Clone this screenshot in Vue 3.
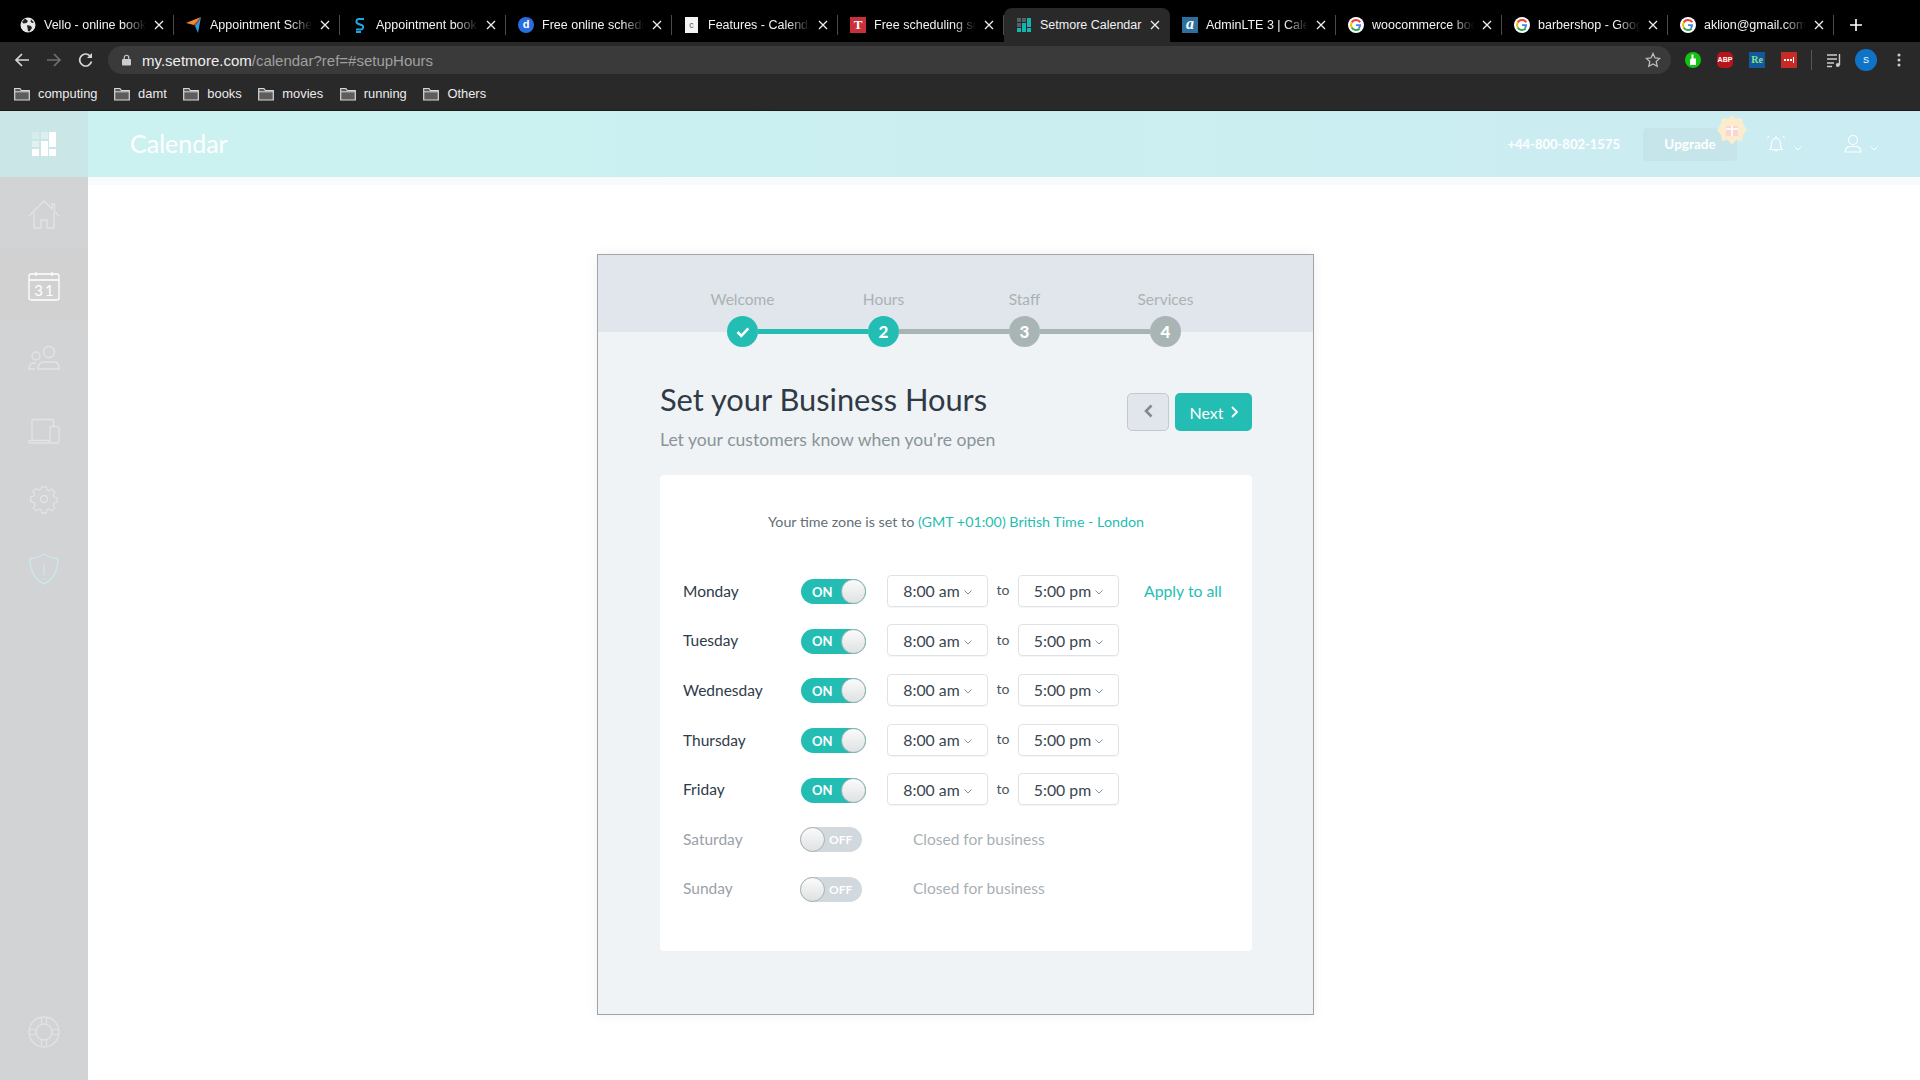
<script setup>
import { ref } from "vue";

const tabs = ref([
  { id: 1, title: "Vello - online booking", icon: "globe" },
  { id: 2, title: "Appointment Scheduling", icon: "plane" },
  { id: 3, title: "Appointment booking", icon: "s" },
  { id: 4, title: "Free online scheduling", icon: "d" },
  { id: 5, title: "Features - Calendar", icon: "page" },
  { id: 6, title: "Free scheduling software", icon: "t" },
  { id: 7, title: "Setmore Calendar", icon: "setmore", active: true },
  { id: 8, title: "AdminLTE 3 | Calendar", icon: "a" },
  { id: 9, title: "woocommerce booking", icon: "g" },
  { id: 10, title: "barbershop - Google", icon: "g" },
  { id: 11, title: "aklion@gmail.com", icon: "g" }
]);

const bookmarks = ["computing", "damt", "books", "movies", "running", "Others"];
const steps = ["Welcome", "Hours", "Staff", "Services"];

// Horario de cada dia
const days = ref([
  { name: "Monday", open: true, apply: true },
  { name: "Tuesday", open: true },
  { name: "Wednesday", open: true },
  { name: "Thursday", open: true },
  { name: "Friday", open: true },
  { name: "Saturday", open: false },
  { name: "Sunday", open: false }
]);
</script>

<template>
  <div class="page">
    <!-- Browser -->
    <div class="tabstrip">
      <div v-for="tab in tabs" :key="tab.id" class="tab" :class="{ active: tab.active }">
        <span class="favicon">
          <svg v-if="tab.icon === 'globe'" viewBox="0 0 16 16" width="16" height="16"><circle cx="8" cy="8" r="7.500" fill="#e8e8e8"/><path d="M5 1.500 8 4 6.500 6 3.500 6.500 2 5ZM7 8l4 1 1 2-2.500 3.500L8 14 7.500 11ZM11 2.500l3 3-2 .5-1.500-1.500Z" fill="#222"/></svg>
          <svg v-else-if="tab.icon === 'plane'" viewBox="0 0 16 16" width="16" height="16"><path d="M0 6 15 0 8 8Z" fill="#f28a30"/><path d="M15 0 12 16 9 9Z" fill="#2f9bd6"/><path d="M9 9 8 8 15 0Z" fill="#d5433a"/></svg>
          <svg v-else-if="tab.icon === 's'" viewBox="0 0 16 16" width="16" height="16"><path d="M12 2H7a2.500 2.500 0 0 0-1 4.800l4 1.400a2.300 2.300 0 0 1-1 4.300H4M4 15h5" fill="none" stroke="#1ea7e8" stroke-width="2"/></svg>
          <span v-else-if="tab.icon === 'd'" class="fav-d">d</span>
          <span v-else-if="tab.icon === 'page'" class="fav-page">c</span>
          <span v-else-if="tab.icon === 't'" class="fav-t">T</span>
          <svg v-else-if="tab.icon === 'setmore'" viewBox="0 0 16 16" width="16" height="16">
            <rect x="1" y="1" width="4" height="4" fill="#56606a"/><rect x="6" y="1" width="4" height="4" fill="#56606a"/><rect x="11" y="1" width="4" height="9" fill="#13b5ad"/>
            <rect x="1" y="6" width="4" height="4" fill="#56606a"/><rect x="6" y="6" width="4" height="9" fill="#13b5ad"/>
            <rect x="1" y="11" width="4" height="4" fill="#13b5ad"/><rect x="11" y="11" width="4" height="4" fill="#13b5ad"/>
          </svg>
          <span v-else-if="tab.icon === 'a'" class="fav-a">a</span>
          <svg v-else viewBox="0 0 16 16" width="16" height="16">
            <circle cx="8" cy="8" r="8" fill="#fff"/>
            <path d="M12.300 5.300A5 5 0 0 0 3.700 5.500" fill="none" stroke="#ea4335" stroke-width="2"/>
            <path d="M3.700 5.500a5 5 0 0 0 0 5" fill="none" stroke="#fbbc05" stroke-width="2"/>
            <path d="M3.700 10.500a5 5 0 0 0 8 1" fill="none" stroke="#34a853" stroke-width="2"/>
            <path d="M8 7.200h5v1a5 5 0 0 1-1.300 3.300L10 10.300a2.500 2.500 0 0 0 .8-1.300H8Z" fill="#4285f4"/>
          </svg>
        </span>
        <span class="tab-title">{{ tab.title }}</span>
        <svg class="tab-close" viewBox="0 0 10 10" width="10" height="10"><path d="M1 1l8 8M9 1 1 9" stroke="#eee" stroke-width="1.300"/></svg>
      </div>
      <svg class="new-tab" viewBox="0 0 12 12" width="12" height="12"><path d="M6 0v12M0 6h12" stroke="#fff" stroke-width="1.600"/></svg>
    </div>

    <div class="toolbar">
      <svg class="nav" viewBox="0 0 16 16" width="16" height="16"><path d="M15 8H2M8 2 2 8l6 6" fill="none" stroke="#d6d6d6" stroke-width="1.700"/></svg>
      <svg class="nav" viewBox="0 0 16 16" width="16" height="16"><path d="M1 8h13M8 2l6 6-6 6" fill="none" stroke="#6f6f6f" stroke-width="1.700"/></svg>
      <svg class="nav" viewBox="0 0 16 16" width="16" height="16"><path d="M13.500 9.500A6 6 0 1 1 12 3.800" fill="none" stroke="#d6d6d6" stroke-width="1.700"/><path d="M14 1v5H9Z" fill="#d6d6d6"/></svg>
      <div class="omnibox">
        <svg viewBox="0 0 10 12" width="9" height="12"><rect y="5" width="10" height="7" rx="1" fill="#ccc"/><path d="M2.500 5V3.200a2.500 2.500 0 0 1 5 0V5" fill="none" stroke="#ccc" stroke-width="1.300"/></svg>
        <span class="url"><b>my.setmore.com</b>/calendar?ref=#setupHours</span>
        <svg class="star" viewBox="0 0 16 16" width="16" height="16"><path d="m8 1.500 2 4.400 4.700.5-3.500 3.200 1 4.700L8 12l-4.200 2.300 1-4.700-3.500-3.200 4.700-.5Z" fill="none" stroke="#bdbdbd" stroke-width="1.300"/></svg>
      </div>
      <div class="extensions">
        <svg viewBox="0 0 16 16" width="16" height="16"><circle cx="8" cy="8" r="8" fill="#12c412"/><path d="M6.500 2.500h2v4h2.500v6.500H5V7.500l1.500-1Z" fill="#fff"/></svg>
        <span class="ext-abp">ABP</span>
        <span class="ext-re">Re</span>
        <span class="ext-dots">
          <i></i><i></i><i></i><i class="bar"></i>
        </span>
        <span class="ext-sep"></span>
        <svg viewBox="0 0 16 16" width="16" height="16"><path d="M1 3h10M1 7h10M1 11h7M1 14.500h5" stroke="#ccc" stroke-width="1.400"/><path d="M13.500 2v11" stroke="#ccc" stroke-width="1.400"/><circle cx="11.800" cy="13" r="2" fill="#ccc"/></svg>
        <span class="avatar">S</span>
        <svg viewBox="0 0 4 16" width="4" height="16"><circle cx="2" cy="3" r="1.500" fill="#ccc"/><circle cx="2" cy="8" r="1.500" fill="#ccc"/><circle cx="2" cy="13" r="1.500" fill="#ccc"/></svg>
      </div>
    </div>

    <div class="bookmarks">
      <div v-for="item in bookmarks" :key="item" class="bookmark">
        <svg viewBox="0 0 16 14" width="16" height="14"><path d="M.7 13V1.500h5.200l1.500 2h7.900V13Z" fill="#5d5d5d" stroke="#d8d8d8" stroke-width="1.200"/><path d="M.7 4.800h14.600" stroke="#d8d8d8"/></svg>
        <span>{{ item }}</span>
      </div>
    </div>

    <!-- Setmore -->
    <header class="app-header">
      <div class="logo">
        <svg viewBox="0 0 24 24" width="24" height="24">
          <rect x="0" y="0" width="7" height="7" fill="#fff" opacity=".25"/><rect x="9" y="0" width="7" height="7" fill="#fff" opacity=".35"/><rect x="17" y="0" width="7" height="15" fill="#fff"/>
          <rect x="0" y="9" width="7" height="6" fill="#fff" opacity=".45"/><rect x="9" y="9" width="7" height="15" fill="#fff"/>
          <rect x="0" y="17" width="7" height="7" fill="#fff"/><rect x="17" y="17" width="7" height="7" fill="#fff"/>
        </svg>
      </div>
      <h1 class="app-title">Calendar</h1>
      <span class="phone">+44-800-802-1575</span>
      <div class="upgrade">
        Upgrade
        <svg class="gift" viewBox="0 0 30 30" width="30" height="30">
          <path d="m15 0 4 4 6-1 1 6 4 6-4 5-1 6-6-1-4 5-4-5-6 1-1-6-4-5 4-6 1-6 6 1Z" fill="#fbeccb"/>
          <rect x="9" y="11" width="12" height="10" fill="#fbd5d5"/><path d="M15 10v11M9 14h12" stroke="#fff" stroke-width="1.500"/>
        </svg>
      </div>
      <svg class="bell" viewBox="0 0 20 20" width="20" height="20"><path d="M4 15.500c1.500-1.500 1.500-3.500 1.500-6.500a4.500 4.500 0 0 1 9 0c0 3 0 5 1.500 6.500ZM8.500 15.500a1.500 1.500 0 0 0 3 0M1.500 4 3 2M18.500 4 17 2M10 4.500V1.500" fill="none" stroke="#fff" stroke-width="1.200"/></svg>
      <svg class="caret" viewBox="0 0 8 5" width="8" height="5"><path d="m.5.5 3.500 3.500L7.500.5" fill="none" stroke="#fff"/></svg>
      <svg class="user" viewBox="0 0 18 20" width="18" height="20"><circle cx="9" cy="6" r="4.500" fill="none" stroke="#fff" stroke-width="1.200"/><path d="M1 18c0-4 3-5.500 5-5.500h6c2 0 5 1.500 5 5.500Z" fill="none" stroke="#fff" stroke-width="1.200"/></svg>
      <svg class="caret" viewBox="0 0 8 5" width="8" height="5"><path d="m.5.5 3.500 3.500L7.500.5" fill="none" stroke="#fff"/></svg>
    </header>

    <div class="app-body">
      <aside class="sidebar">
        <div class="side-item">
          <svg viewBox="0 0 32 32" width="32" height="32"><path d="M1 17 16 2l8 8V5h2.500v7.500L31 17M6 14v15h7v-8h6v8h7V14" fill="none" stroke="#e2e3e4" stroke-width="1.400"/></svg>
        </div>
        <div class="side-item current">
          <svg viewBox="0 0 32 32" width="32" height="32"><rect x="1" y="3" width="30" height="26" rx="2" fill="none" stroke="#fff" stroke-width="1.300"/><path d="M1 9h30M8 1v4M24 1v4" stroke="#fff" stroke-width="1.300"/><text x="17" y="25" text-anchor="middle" class="cal-num">31</text></svg>
        </div>
        <div class="side-item">
          <svg viewBox="0 0 32 32" width="32" height="32"><circle cx="21" cy="9" r="5.500" fill="none" stroke="#e2e3e4" stroke-width="1.400"/><circle cx="8" cy="13" r="4" fill="none" stroke="#e2e3e4" stroke-width="1.400"/><path d="M10 26c0-5 3-7 6-7h10c3 0 5 2 5 7ZM7 26H1c0-4 2-6 5-6h2" fill="none" stroke="#e2e3e4" stroke-width="1.400"/></svg>
        </div>
        <div class="side-item">
          <svg viewBox="0 0 32 32" width="32" height="32"><path d="M4 24V6a1.500 1.500 0 0 1 1.500-1.500h20V11M1 25.500h20V28H2.500A1.500 1.500 0 0 1 1 26.500Z" fill="none" stroke="#e2e3e4" stroke-width="1.400"/><rect x="22" y="11.500" width="9" height="16.500" rx="1.500" fill="none" stroke="#e2e3e4" stroke-width="1.400"/></svg>
        </div>
        <div class="side-item small">
          <svg viewBox="0 0 28 28" width="28" height="28"><path d="M11.500 1h5l.7 3.500 2.300 1 3-2 3.500 3.500-2 3 1 2.300 3.500.7v5l-3.500.7-1 2.300 2 3-3.500 3.500-3-2-2.300 1-.7 3.500h-5l-.7-3.500-2.300-1-3 2-3.500-3.500 2-3-1-2.300L-1 17v-5l3.500-.7 1-2.300-2-3L5 2.500l3 2 2.300-1Z" transform="translate(1.500 0) scale(.9)" fill="none" stroke="#e2e3e4" stroke-width="1.400"/><circle cx="14" cy="13" r="3.500" fill="none" stroke="#e2e3e4" stroke-width="1.400"/></svg>
        </div>
        <div class="side-item small">
          <svg viewBox="0 0 32 32" width="32" height="32"><path d="M16 1c4 2.500 9 4 14 4.500C30 17 26 26 16 31 6 26 2 17 2 5.500 7 5 12 3.500 16 1ZM16 12v10M16 25v1.500" fill="none" stroke="#c8e9ec" stroke-width="1.400"/></svg>
        </div>
        <div class="side-item help">
          <svg viewBox="0 0 32 32" width="32" height="32"><circle cx="16" cy="16" r="15" fill="none" stroke="#e2e3e4" stroke-width="1.300"/><circle cx="16" cy="16" r="8" fill="none" stroke="#e2e3e4" stroke-width="1.300"/><path d="M13.500 1.500v7M18.500 1.500v7M13.500 23.500v7M18.500 23.500v7M1.500 13.500h7M1.500 18.500h7M23.500 13.500h7M23.500 18.500h7" stroke="#e2e3e4" stroke-width="1.200"/></svg>
        </div>
      </aside>

      <main class="main">
        <section class="wizard">
          <div class="wizard-band">
            <div class="step-labels">
              <span v-for="step in steps" :key="step">{{ step }}</span>
            </div>
          </div>
          <div class="stepper">
            <span class="dot on">
              <svg viewBox="0 0 14 12" width="14" height="12"><path d="m1.500 6 3.800 3.800 7-7.500" fill="none" stroke="#fff" stroke-width="2.600"/></svg>
            </span>
            <span class="line on"></span>
            <span class="dot on">2</span>
            <span class="line"></span>
            <span class="dot">3</span>
            <span class="line"></span>
            <span class="dot">4</span>
          </div>

          <div class="wizard-body">
            <div class="wizard-top">
              <div>
                <h2 class="wizard-title">Set your Business Hours</h2>
                <p class="wizard-sub">Let your customers know when you're open</p>
              </div>
              <div class="wizard-actions">
                <button class="btn-back">
                  <svg viewBox="0 0 9 14" width="9" height="14"><path d="M7.500 1.500 2 7l5.500 5.500" fill="none" stroke="#85898b" stroke-width="2.600"/></svg>
                </button>
                <button class="btn-next">
                  Next
                  <svg viewBox="0 0 7 12" width="7" height="12"><path d="m1 1 5 5-5 5" fill="none" stroke="#fff" stroke-width="1.800"/></svg>
                </button>
              </div>
            </div>

            <div class="panel">
              <p class="timezone">Your time zone is set to <span class="teal">(GMT +01:00) British Time - London</span></p>

              <div v-for="day in days" :key="day.name" class="day-row">
                <span class="day-name" :class="{ closed: !day.open }">{{ day.name }}</span>
                <template v-if="day.open">
                  <span class="switch on">
                    <span class="switch-text">ON</span>
                    <span class="knob"></span>
                  </span>
                  <span class="select first">8:00 am
                    <svg viewBox="0 0 8 5" width="8" height="5"><path d="m.5.5 3.500 3.500L7.500.5" fill="none" stroke="#8b9297"/></svg>
                  </span>
                  <span class="to">to</span>
                  <span class="select">5:00 pm
                    <svg viewBox="0 0 8 5" width="8" height="5"><path d="m.5.5 3.500 3.500L7.500.5" fill="none" stroke="#8b9297"/></svg>
                  </span>
                  <a v-if="day.apply" class="apply">Apply to all</a>
                </template>
                <template v-else>
                  <span class="switch off">
                    <span class="knob"></span>
                    <span class="switch-text">OFF</span>
                  </span>
                  <span class="closed-text">Closed for business</span>
                </template>
              </div>
            </div>
          </div>
        </section>
      </main>
    </div>
  </div>
</template>

<style>
html, body {
  margin: 0;
  background: #fff;
}
</style>

<style scoped>
.page {
  width: 1920px;
  height: 1080px;
  overflow: hidden;
  display: flex;
  flex-direction: column;
  font-family: "Lato", "Liberation Sans", sans-serif;
}

/* Browser */
.tabstrip {
  height: 34px;
  padding: 8px 0 0 8px;
  background: #000;
  display: flex;
  align-items: stretch;
  font-family: "Liberation Sans", sans-serif;
}

.tab {
  position: relative;
  width: 166px;
  box-sizing: border-box;
  padding: 0 10px 0 12px;
  display: flex;
  align-items: center;
  color: #f2f2f2;
  font-size: 12.500px;
}

.tab::after {
  content: "";
  position: absolute;
  right: 0;
  top: 7px;
  bottom: 7px;
  width: 1px;
  background: #4a4a4a;
}

.tab.active {
  background: #292929;
  border-radius: 8px 8px 0 0;
}

.tab.active::after {
  display: none;
}

.favicon {
  width: 16px;
  height: 16px;
  flex: none;
  margin-right: 8px;
  display: flex;
}

.fav-d {
  width: 16px;
  height: 16px;
  border-radius: 50%;
  background: #2a6de0;
  color: #fff;
  font: bold 11px/15px "Liberation Sans", sans-serif;
  text-align: center;
}

.fav-page {
  width: 13px;
  height: 16px;
  margin-left: 1px;
  background: #f4f4f4;
  color: #555;
  font: 9px/17px "Liberation Sans", sans-serif;
  text-align: center;
}

.fav-t {
  width: 16px;
  height: 16px;
  background: #c8303a;
  color: #fff;
  font: bold 13px/15px "Liberation Serif", serif;
  text-align: center;
}

.fav-a {
  width: 16px;
  height: 16px;
  background: #2d6f9f;
  color: #fff;
  font: italic bold 16px/13px "Liberation Serif", serif;
  text-align: center;
}

.tab-title {
  flex: 1;
  min-width: 0;
  overflow: hidden;
  white-space: nowrap;
  line-height: 16px;
  -webkit-mask-image: linear-gradient(to right, #000 78%, transparent 100%);
  mask-image: linear-gradient(to right, #000 78%, transparent 100%);
}

.active .tab-title {
  -webkit-mask-image: none;
  mask-image: none;
}

.tab-close {
  flex: none;
  margin-left: 8px;
}

.new-tab {
  align-self: center;
  margin-left: 16px;
}

.toolbar {
  height: 32px;
  background: #292929;
  display: flex;
  align-items: flex-start;
  padding: 4px 0 0 14px;
  box-sizing: border-box;
}

.nav {
  flex: none;
  margin: 6px 16px 0 0;
}

.omnibox {
  width: 1563px;
  height: 28px;
  margin-left: -2px;
  padding: 0 10px 0 14px;
  box-sizing: border-box;
  border-radius: 14px;
  background: #3a3a3a;
  display: flex;
  align-items: center;
  font-family: "Liberation Sans", sans-serif;
}

.url {
  margin-left: 11px;
  color: #a0a0a0;
  font-size: 15px;
}

.url b {
  color: #eee;
  font-weight: 400;
}

.star {
  margin-left: auto;
}

.extensions {
  height: 28px;
  margin-left: 14px;
  display: flex;
  align-items: center;
  font-family: "Liberation Sans", sans-serif;
}

.extensions > svg {
  flex: none;
}

.ext-abp {
  width: 16px;
  height: 16px;
  margin-left: 16px;
  background: #b8141b;
  border-radius: 5px;
  color: #fff;
  font: bold 7px/16px "Liberation Sans", sans-serif;
  text-align: center;
}

.ext-re {
  width: 16px;
  height: 16px;
  margin-left: 16px;
  background: #11589c;
  color: #8fe08f;
  font: bold 10px/15px "Liberation Serif", serif;
  text-align: center;
}

.ext-dots {
  width: 16px;
  height: 16px;
  margin-left: 16px;
  background: #c82a26;
  display: flex;
  align-items: center;
  justify-content: center;
  gap: 1px;
}

.ext-dots i {
  width: 2px;
  height: 2px;
  background: #fff;
}

.ext-dots i.bar {
  height: 6px;
  width: 1px;
}

.ext-sep {
  width: 1px;
  height: 20px;
  margin: 0 14px;
  background: #555;
}

.avatar {
  width: 22px;
  height: 22px;
  margin: 0 20px 0 13px;
  border-radius: 50%;
  background: #0f74c8;
  color: #fff;
  font-size: 9px;
  line-height: 22px;
  text-align: center;
}

.bookmarks {
  height: 37px;
  padding: 3px 0 0 14px;
  box-sizing: border-box;
  background: #292929;
  border-bottom: 1px solid #1a1a1a;
  display: flex;
  align-items: center;
  gap: 16.600px;
  color: #ececec;
  font: 12.900px "Liberation Sans", sans-serif;
}

.bookmark {
  display: flex;
  align-items: center;
  gap: 8px;
}

/* Setmore header */
.app-header {
  height: 66px;
  flex: none;
  display: flex;
  align-items: center;
  background: linear-gradient(to right, #cbf2f0, #cbecf2);
  color: #fff;
}

.logo {
  width: 88px;
  height: 66px;
  background: #cbe6e6;
  display: flex;
  align-items: center;
  justify-content: center;
}

.app-title {
  margin: -2px 0 0 42px;
  font-size: 25px;
  font-weight: 400;
}

.phone {
  margin-left: auto;
  font-size: 13px;
  font-weight: 700;
}

.upgrade {
  position: relative;
  width: 94px;
  height: 33px;
  margin-left: 23px;
  border-radius: 4px;
  background: #c6e5ea;
  font-size: 13.500px;
  font-weight: 700;
  line-height: 33px;
  text-align: center;
}

.gift {
  position: absolute;
  top: -13px;
  right: -10px;
}

.bell {
  margin-left: 29px;
}

.caret {
  margin: 8px 0 0 8px;
}

.user {
  margin-left: 42px;
}

.user + .caret {
  margin-right: 42px;
}

/* Sidebar */
.app-body {
  flex: 1;
  display: flex;
  min-height: 0;
}

.sidebar {
  width: 88px;
  flex: none;
  background: #d2d3d5;
  display: flex;
  flex-direction: column;
}

.side-item {
  height: 72px;
  box-sizing: border-box;
  padding-top: 3px;
  display: flex;
  align-items: center;
  justify-content: center;
  flex: none;
}

.side-item.small {
  height: 69px;
  padding-top: 0;
}

.side-item.current {
  background: #d0d1d0;
}

.side-item.help {
  margin-top: auto;
  margin-bottom: 12px;
  padding-top: 0;
}

.cal-num {
  fill: #fff;
  font: 400 15px "Lato", sans-serif;
  letter-spacing: 2px;
}

/* Wizard */
.main {
  flex: 1;
  min-width: 0;
  border-top: 8px solid #f8fafb;
}

.wizard {
  width: 717px;
  height: 761px;
  box-sizing: border-box;
  margin: 69px 0 0 509px;
  border: 1px solid #a0a4a6;
  background: #eff3f6;
  box-shadow: 0 0 12px rgba(0, 0, 0, 0.06);
}

.wizard-band {
  height: 77px;
  padding-top: 34px;
  box-sizing: border-box;
  background: #e0e6ec;
}

.step-labels {
  width: 564px;
  margin-left: 74px;
  display: grid;
  grid-template-columns: repeat(4, 141px);
  color: #aab3b3;
  font-size: 15.500px;
  line-height: 20px;
  text-align: center;
}

.stepper {
  width: 454px;
  margin: -16px 0 0 129px;
  display: flex;
  align-items: center;
  position: relative;
}

.dot {
  width: 31px;
  height: 31px;
  flex: none;
  border-radius: 50%;
  background: #a9b5b4;
  color: #fff;
  font-size: 17px;
  font-weight: 900;
  display: flex;
  align-items: center;
  justify-content: center;
}

.dot.on {
  background: #24bdb3;
}

.line {
  flex: 1;
  height: 5px;
  background: #a9b5b4;
}

.line.on {
  background: #24bdb3;
}

.wizard-body {
  padding: 0 61px 0 62px;
}

.wizard-top {
  height: 128px;
  display: flex;
  justify-content: space-between;
}

.wizard-title {
  margin: 35px 0 0;
  color: #2f3a45;
  font-size: 30.800px;
  font-weight: 400;
  line-height: 36px;
}

.wizard-sub {
  margin: 10px 0 0;
  color: #8a9499;
  font-size: 17.600px;
  line-height: 24px;
}

.wizard-actions {
  display: flex;
  gap: 6px;
  margin-top: 46px;
  height: 38px;
}

.btn-back {
  width: 42px;
  padding: 0;
  border: 1px solid #c4c9cc;
  border-radius: 5px;
  background: #e0e6ec;
}

.btn-next {
  width: 77px;
  padding: 0;
  border: none;
  border-radius: 5px;
  background: #24bdb3;
  color: #fff;
  font: 16px "Lato", sans-serif;
  display: flex;
  align-items: center;
  justify-content: center;
  gap: 7px;
}

.panel {
  height: 476px;
  box-sizing: border-box;
  padding: 36px 0 0 23px;
  border-radius: 4px;
  background: #fff;
}

.timezone {
  margin: 0 0 0 -23px;
  height: 22px;
  color: #646f78;
  font-size: 14.300px;
  line-height: 22px;
  text-align: center;
}

.teal {
  color: #26bdb3;
}

.day-row {
  height: 49.600px;
  display: flex;
  align-items: center;
}

.timezone + .day-row {
  margin-top: 33px;
}

.day-name {
  width: 118px;
  flex: none;
  color: #2f3b4a;
  font-size: 15.500px;
}

.day-name.closed {
  color: #9aa1a8;
}

.switch {
  width: 65px;
  height: 25px;
  margin-top: 2px;
  flex: none;
  box-sizing: border-box;
  border-radius: 13px;
  display: flex;
  align-items: center;
  color: #fff;
  font-weight: 700;
}

.switch.on {
  background: #24bdb3;
  justify-content: space-between;
  padding-left: 11px;
  font-size: 13px;
}

.switch.off {
  width: 62px;
  margin-left: -1px;
  background: #d1d8de;
  font-size: 12px;
  gap: 4px;
}

.knob {
  width: 25px;
  height: 25px;
  box-sizing: border-box;
  border-radius: 50%;
  border: 1px solid #a8b4b4;
  background: linear-gradient(#fbfbfb, #dfe1e2);
}

.select {
  width: 101px;
  height: 32px;
  flex: none;
  box-sizing: border-box;
  border: 1px solid #e0e3e5;
  border-radius: 4px;
  box-shadow: 0 1px 1px rgba(0, 0, 0, 0.04);
  color: #3a4550;
  font-size: 15.800px;
  display: flex;
  align-items: center;
  justify-content: center;
  gap: 4px;
}

.select svg {
  margin-top: 4px;
}

.select.first {
  margin-left: 21px;
}

.to {
  width: 30px;
  margin-top: -2px;
  flex: none;
  color: #4a5560;
  font-size: 14px;
  text-align: center;
}

.apply {
  margin-left: 25px;
  color: #26bdb3;
  font-size: 15.800px;
}

.closed-text {
  margin-left: 51px;
  color: #a9b0b5;
  font-size: 15.500px;
}
</style>
